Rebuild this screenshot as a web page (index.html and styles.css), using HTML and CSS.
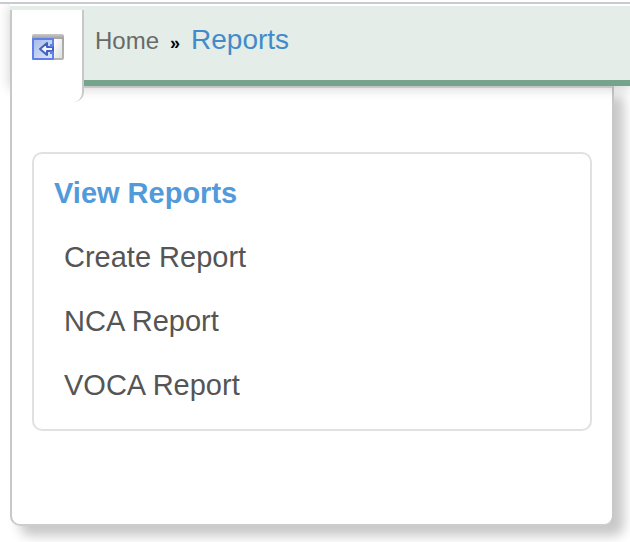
FILE: index.html
```
<!DOCTYPE html>
<html lang="en">
<head>
	<meta charset="utf-8">
	<title>Reports</title>
	<link rel="stylesheet" href="styles.css">
</head>

<body>
	<div class="page">
		<header class="header">
			<div class="tab">
				<button type="button" class="toggle" aria-label="Collapse menu">
					<svg width="32" height="28" viewBox="0 0 32 28" aria-hidden="true">
						<defs>
							<linearGradient id="frame" x1="0" y1="0" x2="0" y2="1">
								<stop offset="0" stop-color="#c9c9c9"/>
								<stop offset="0.150" stop-color="#a6a6a6"/>
								<stop offset="1" stop-color="#b4b4b4"/>
							</linearGradient>
							<linearGradient id="pane" x1="0" y1="0" x2="1" y2="1">
								<stop offset="0" stop-color="#a9bdea"/>
								<stop offset="1" stop-color="#dce6fa"/>
							</linearGradient>
							<linearGradient id="side" x1="0" y1="0" x2="1" y2="1">
								<stop offset="0" stop-color="#ffffff"/>
								<stop offset="1" stop-color="#dedede"/>
							</linearGradient>
						</defs>
						<rect x="0" y="0" width="32" height="26" rx="2" fill="url(#frame)"/>
						<rect x="22" y="5" width="8" height="19" fill="url(#side)"/>
						<rect x="0" y="4" width="22" height="22" rx="1" fill="#5f80e6"/>
						<rect x="2" y="6" width="18" height="18" fill="url(#pane)"/>
						<path d="M8 15l7-6v4h6v4h-6v4z" fill="#f4f7ff" stroke="#4461bd" stroke-width="2" stroke-linejoin="round"/>
						<path d="M18 10h3v3h-3zM18 17h3v3h-3z" fill="#5f80e6"/>
					</svg>
				</button>
			</div>
			<nav class="breadcrumb" aria-label="Breadcrumb">
				<a class="home" href="#">Home</a>
				<span class="arrow">»</span>
				<a class="current" href="#">Reports</a>
			</nav>
		</header>

		<main class="panel">
			<section class="box">
				<h2>View Reports</h2>
				<ul>
					<li><a href="#">Create Report</a></li>
					<li><a href="#">NCA Report</a></li>
					<li><a href="#">VOCA Report</a></li>
				</ul>
			</section>
		</main>
	</div>
</body>
</html>
```
FILE: styles.css
```
body {
	margin: 0;
	background: #fff;
	font-family: "Liberation Sans", Arial, sans-serif;
}

a {
	text-decoration: none;
}

.page {
	margin-top: 2px;
	padding-left: 10px;
	border-top: 2px solid #c8ccd0;
	overflow: hidden;
}

/* green bar, sits above the panel so its shadow falls on it */
.header {
	position: relative;
	z-index: 1;
	display: flex;
	align-items: flex-start;
	box-sizing: border-box;
	height: 82px;
	border-top: 2px solid #fff;
	border-bottom: 6px solid #75a38b;
	background: #e4ede7;
	box-shadow: 0 2px 12px rgba(0, 0, 0, 0.2);
}

/* white tab that hangs below the bar */
.tab {
	box-sizing: border-box;
	width: 74px;
	height: 92px;
	margin-top: 4px;
	padding: 24px 20px;
	border-left: 2px solid #c8c8c8;
	border-right: 2px solid #c8c8c8;
	border-bottom-right-radius: 10px;
	background: #fff;
}

.toggle {
	display: block;
	padding: 0;
	border: none;
	background: none;
	cursor: pointer;
}

.toggle svg {
	display: block;
}

.breadcrumb {
	display: flex;
	align-items: baseline;
	gap: 11px;
	padding: 16px 11px;
	line-height: 36px;
}

.home {
	color: #696969;
	font-size: 24px;
}

.arrow {
	color: #000;
	font-size: 18px;
	font-weight: bold;
}

.current {
	color: #428bca;
	font-size: 28px;
}

.panel {
	margin-right: 16px;
	margin-bottom: 20px;
	padding: 64px 20px 93px;
	border: 2px solid #c8c8c8;
	border-top-color: #e0e0e0;
	border-bottom-color: #cdcdcd;
	border-radius: 0 0 10px 10px;
	background: #fff;
	box-shadow: 10px 10px 12px #c8c8c8;
}

.box {
	padding: 7px 20px 12px;
	border: 2px solid #e1e1e1;
	border-radius: 10px;
	font-size: 29px;
	line-height: 64px;
}

.box h2 {
	margin: 0;
	color: #529ad9;
	font-size: 29px;
}

.box ul {
	margin: 0;
	padding: 0 10px;
	list-style: none;
}

.box a {
	color: #555;
}
```
